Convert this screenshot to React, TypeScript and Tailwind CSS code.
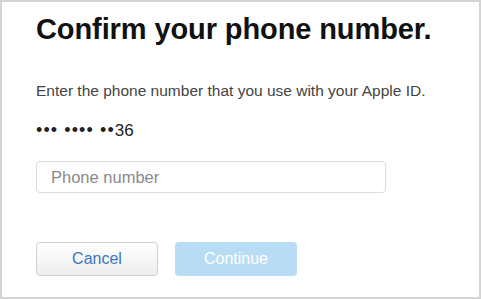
import React from 'react';

const App: React.FC = () => {
  return (
    <div className="w-[481px] h-[299px] bg-white border-2 border-[#d4d4d4] font-['Liberation_Sans',Arial,sans-serif]">
      <div className="pl-[34px] pt-[10px]">
        <h1 className="text-[29px] leading-[34px] font-bold text-[#111] tracking-[-0.1px]">
          Confirm your phone number.
        </h1>
        <p className="mt-[36px] text-[15.5px] leading-[18px] text-[#444]">
          Enter the phone number that you use with your Apple ID.
        </p>
        <p className="mt-[21px] h-[18px] text-[17px] leading-[18px] text-[#222] whitespace-nowrap">
          <span className="text-[18px] leading-[18px] tracking-[1.1px]">••• •••• ••</span>36
        </p>
        <input
          type="text"
          placeholder="Phone number"
          className="mt-[22px] block w-[350px] h-[32px] px-[14px] rounded-[4px] border border-[#dcdcdc] text-[16.5px] text-[#333] placeholder:text-[#8a8a8a] outline-none"
        />
        <div className="mt-[49px] flex gap-[17px]">
          <button className="w-[122px] h-[34px] rounded-[4px] border border-[#cfcfcf] bg-gradient-to-b from-white to-[#ededed] text-[16px] text-[#3a76bf]">
            Cancel
          </button>
          <button className="w-[122px] h-[34px] rounded-[4px] bg-[#b9dcf5] text-[16px] text-white">
            Continue
          </button>
        </div>
      </div>
    </div>
  );
};

export default App;
